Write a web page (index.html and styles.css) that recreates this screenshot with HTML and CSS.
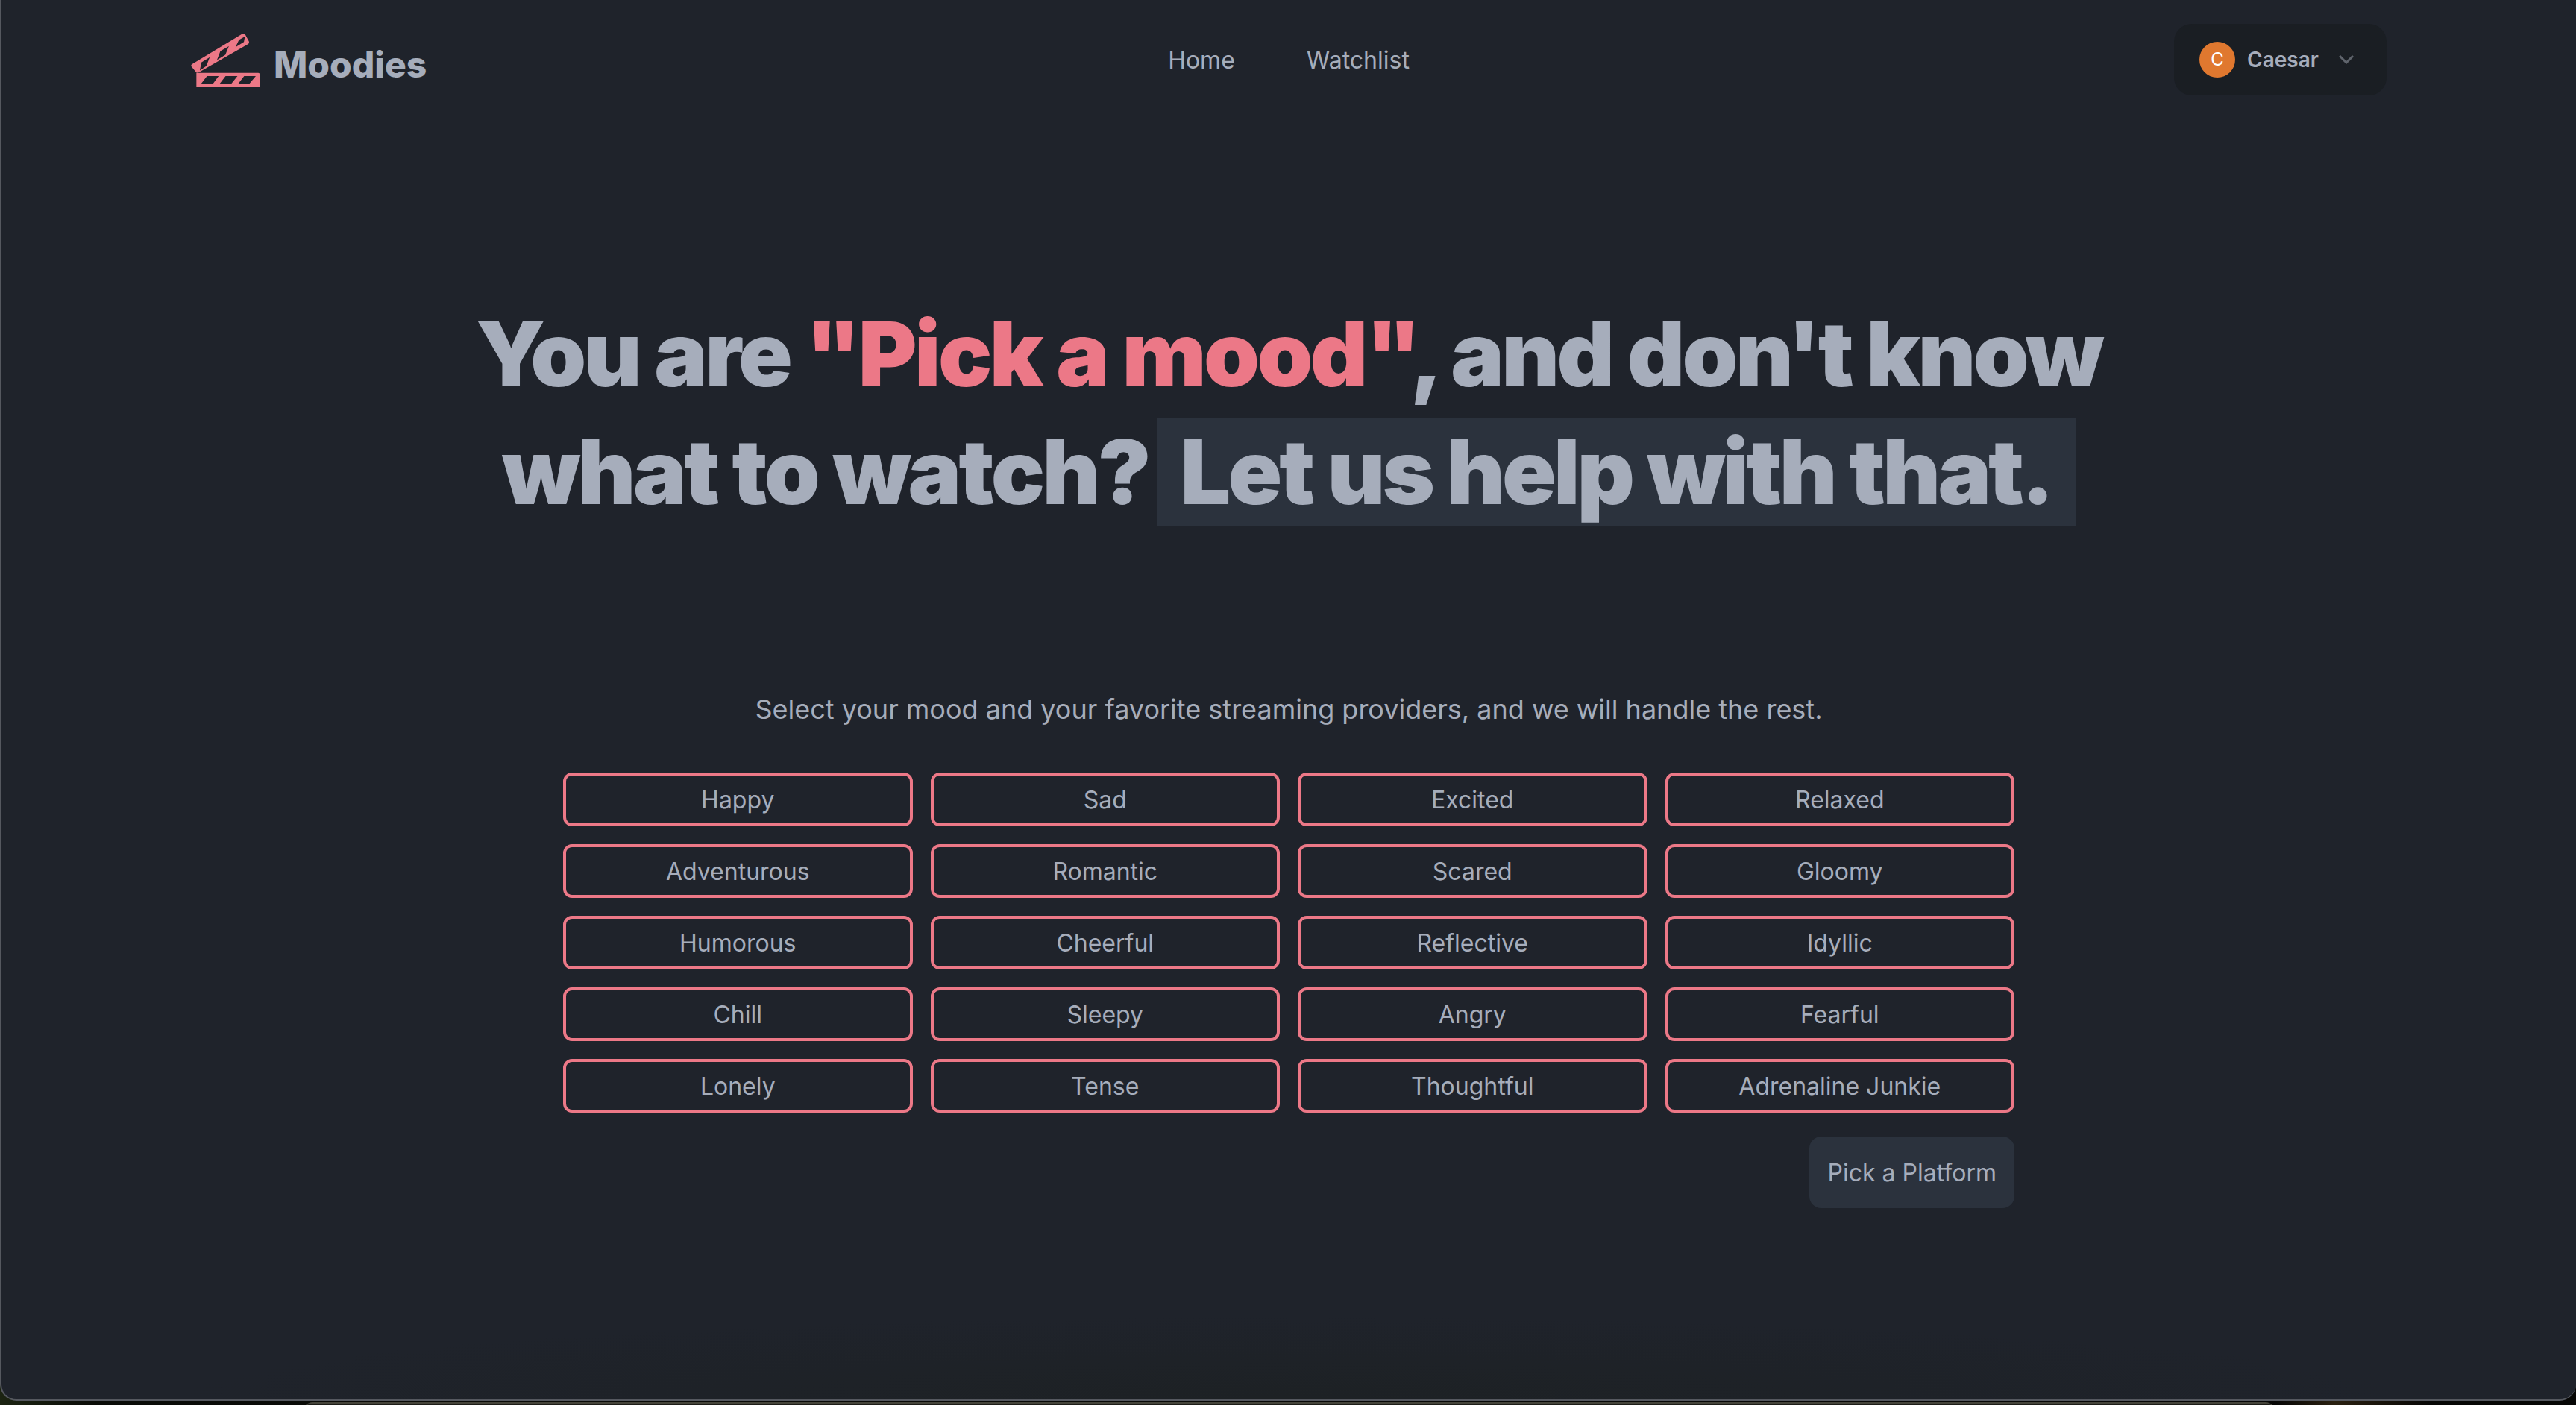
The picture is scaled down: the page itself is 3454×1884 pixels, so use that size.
FILE: index.html
```html
<!DOCTYPE html>
<html>
<head>
  <title>Moodies</title>
  <link rel="stylesheet" href="styles.css">
</head>
<body>
  <div class="window">
    <nav class="navbar">
      <a class="brand" href="#">
        <svg class="brand-icon" viewBox="110 70 280 220">
          <path class="clap" fill-rule="evenodd" d="M116 196 L318 74 Q326 70 330 78 L344 104 Q347 112 340 116 L142 230 Q134 234 130 228 L112 206 Q108 200 116 196 Z M152 190 L186 169 L172 204 L146 222 Z M229 144 L263 124 L249 159 L215 180 Z M304 99 L328 85 L324 107 L290 128 Z"/>
          <path class="clap" fill-rule="evenodd" d="M132 232 L382 232 Q388 232 388 238 L388 290 L132 290 Z M175 245 L222 245 L198 277 L150 277 Z M250 245 L298 245 L272 277 L225 277 Z M325 245 L372 245 L345 277 L300 277 Z"/>
        </svg>
        <span class="brand-name">Moodies</span>
      </a>
      <div class="nav-links">
        <a href="#">Home</a>
        <a href="#">Watchlist</a>
      </div>
      <div class="nav-end">
        <button class="user-btn">
          <span class="avatar">C</span>
          <span class="user-name">Caesar</span>
          <svg class="chevron" viewBox="0 0 20 12"><path d="M1 1 L10 10 L19 1"/></svg>
        </button>
      </div>
    </nav>

    <main class="content">
      <h1 class="headline">You are <span class="mood">"Pick a mood"</span>, and don't know<br>what to watch? <span class="mark">Let us help with that.</span></h1>
      <p class="intro">Select your mood and your favorite streaming providers, and we will handle the rest.</p>

      <div class="picker">
        <div class="mood-grid">
          <button class="mood-btn">Happy</button>
          <button class="mood-btn">Sad</button>
          <button class="mood-btn">Excited</button>
          <button class="mood-btn">Relaxed</button>
          <button class="mood-btn">Adventurous</button>
          <button class="mood-btn">Romantic</button>
          <button class="mood-btn">Scared</button>
          <button class="mood-btn">Gloomy</button>
          <button class="mood-btn">Humorous</button>
          <button class="mood-btn">Cheerful</button>
          <button class="mood-btn">Reflective</button>
          <button class="mood-btn">Idyllic</button>
          <button class="mood-btn">Chill</button>
          <button class="mood-btn">Sleepy</button>
          <button class="mood-btn">Angry</button>
          <button class="mood-btn">Fearful</button>
          <button class="mood-btn">Lonely</button>
          <button class="mood-btn">Tense</button>
          <button class="mood-btn">Thoughtful</button>
          <button class="mood-btn">Adrenaline Junkie</button>
        </div>
        <div class="picker-end">
          <button class="next-btn">Pick a Platform</button>
        </div>
      </div>
    </main>
  </div>
  <div class="back-window"></div>
</body>
</html>
```

FILE: styles.css
```css
* {
  box-sizing: border-box;
}
html, body {
  margin: 0;
  height: 100%;
}
body {
  background: linear-gradient(90deg, #1c2412 0, #0a0b07 130px, #060605 3050px, #2a2010 3130px, #060605 3260px);
  font-family: Inter, sans-serif;
  color: #a6adbb;
  overflow: hidden;
}
a {
  color: inherit;
  text-decoration: none;
}
button {
  font-family: inherit;
  color: inherit;
  cursor: pointer;
}
.window {
  height: 1878px;
  background: radial-gradient(ellipse 1500px 110px at 50% 100%, #1d2124, #1f232b);
  border-left: 2px solid #55585f;
  border-bottom: 2px solid #55585f;
  border-radius: 0 0 22px 22px;
}
.back-window {
  width: 2643px;
  height: 12px;
  margin: 2px 0 0 407px;
  background: #1d1d18;
  border-top: 2px solid #45443a;
  border-radius: 18px 18px 0 0;
}
.navbar {
  display: grid;
  grid-template-columns: 1fr auto 1fr;
  align-items: center;
  padding: 32px 254px 0 254px;
}
.brand {
  display: flex;
  align-items: center;
  gap: 18px;
}
.brand-icon {
  width: 93px;
  height: 73px;
}
.clap {
  fill: #ec7887;
}
.brand-name {
  padding-top: 12px;
  font-size: 48px;
  font-weight: 800;
}
.nav-links {
  display: flex;
  gap: 96px;
  font-size: 32px;
}
.nav-end {
  display: flex;
  justify-content: flex-end;
}
.user-btn {
  display: flex;
  align-items: center;
  width: 285px;
  height: 96px;
  padding: 0 0 0 34px;
  background: #1a1e23;
  border: none;
  border-radius: 24px;
}
.avatar {
  width: 48px;
  height: 48px;
  border-radius: 50%;
  background: #e0782f;
  color: #fff;
  font-size: 24px;
  line-height: 48px;
  text-align: center;
}
.user-name {
  margin-left: 16px;
  font-size: 28px;
  font-weight: 600;
}
.chevron {
  width: 20px;
  height: 12px;
  margin-left: 27px;
  fill: none;
  stroke: #5f646c;
  stroke-width: 3;
}
.content {
  padding-top: 268px;
}
.headline {
  margin: 0;
  font-size: 120px;
  line-height: 158px;
  font-weight: 900;
  letter-spacing: -3.6px;
  text-align: center;
}
.mood {
  color: #ec7887;
}
.mark {
  background: #2b323d;
  margin-left: -10px;
  padding: 0 32px;
  letter-spacing: -3.9px;
}
.intro {
  margin: 212px 0 58px;
  font-size: 36px;
  line-height: 54px;
  text-align: center;
}
.picker {
  width: 1946px;
  margin: 0 auto;
}
.mood-grid {
  display: grid;
  grid-template-columns: repeat(4, 1fr);
  gap: 24px;
}
.mood-btn {
  height: 72px;
  background: transparent;
  border: 4px solid #ec7887;
  border-radius: 12px;
  font-size: 32px;
}
.picker-end {
  display: flex;
  justify-content: flex-end;
  margin-top: 32px;
}
.next-btn {
  height: 96px;
  padding: 0 24px;
  background: #2b323d;
  border: none;
  border-radius: 16px;
  font-size: 32px;
}
```
